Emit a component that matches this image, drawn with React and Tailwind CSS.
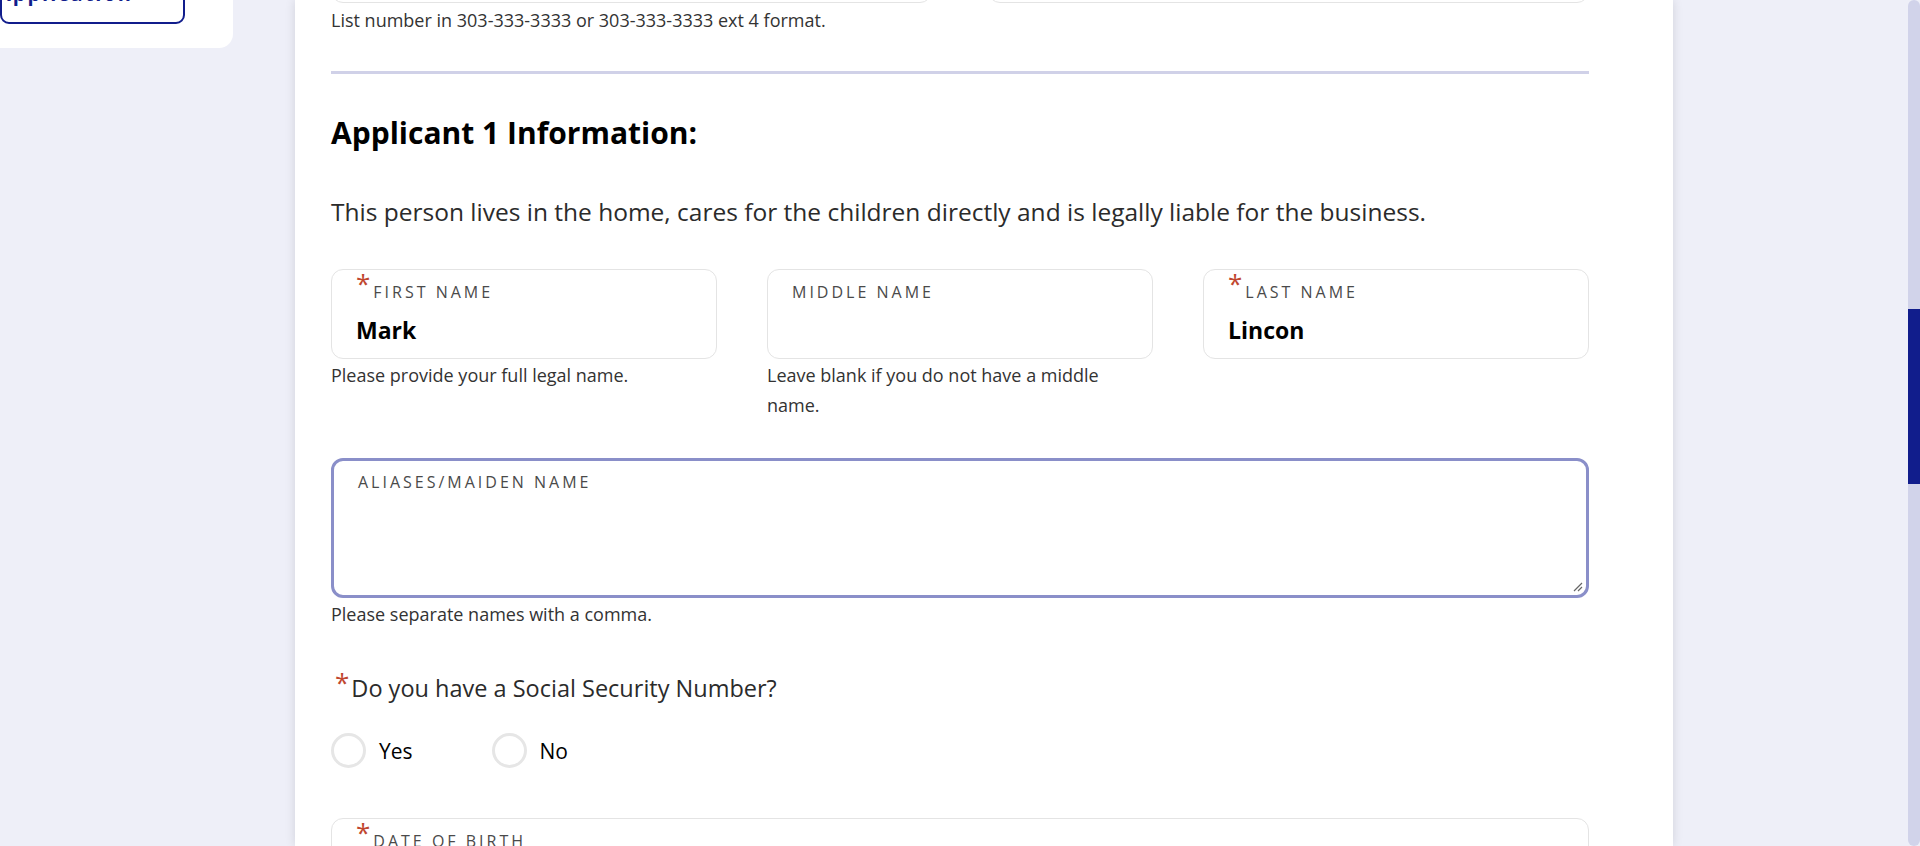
import React from "react";

function FieldBox({ label, value, required }) {
  return (
    <div className="h-[90px] rounded-[12px] border border-[#e4e4e4] bg-white pl-[24px] pr-4 pt-[12px]">
      <div className="flex items-start h-[20px]">
        {required && (
          <span className="relative -top-[9px] mr-[3px] text-[26px] leading-[20px] text-[#c0462f]">*</span>
        )}
        <span className="text-[16px] leading-[20px] tracking-[3px] text-[#4a4a4a] uppercase">{label}</span>
      </div>
      {value && <div className="mt-[14px] text-[23px] font-bold text-black leading-[28px]">{value}</div>}
    </div>
  );
}

function Help({ children, className = "" }) {
  return <p className={"text-[18px] leading-[30px] text-[#333] " + className}>{children}</p>;
}

function Radio({ label }) {
  return (
    <label className="flex items-center mr-[79px]">
      <span className="w-[35px] h-[35px] rounded-full border-[3px] border-[#e6e6e6] bg-white"></span>
      <span className="ml-[13px] text-[21px] leading-[28px] text-black">{label}</span>
    </label>
  );
}

export default function App() {
  return (
    <div className="flex h-[846px] overflow-hidden bg-[#eeeff8] font-['Open_Sans',sans-serif]">
      <aside className="w-[233px] shrink-0">
        <div className="h-[48px] bg-white rounded-br-[14px] flex items-end pb-[24px]">
          <div className="w-[185px] h-[50px] border-2 border-[#111d8c] rounded-[9px] flex items-end justify-end pr-[50px] pb-[18px]">
            <span className="text-[#111d8c] font-bold text-[20px] tracking-[2px] leading-none">Application</span>
          </div>
        </div>
      </aside>
      <div className="w-[62px] shrink-0"></div>
      <main className="w-[1378px] shrink-0 bg-white shadow-[0_0_10px_rgba(0,0,0,0.12)] pl-[36px]">
        <div className="w-[1258px] -mt-[87px]">
          <div className="grid grid-cols-2 gap-[56px]">
            <div className="h-[90px] rounded-[12px] border border-[#e4e4e4]"></div>
            <div className="h-[90px] rounded-[12px] border border-[#e4e4e4]"></div>
          </div>
          <Help className="mt-[2px]">List number in 303-333-3333 or 303-333-3333 ext 4 format.</Help>
          <div className="mt-[36px] h-[3px] bg-[#d0d1e8]"></div>
          <h2 className="mt-[41px] text-[30px] font-bold leading-[36px] text-black">Applicant 1 Information:</h2>
          <p className="mt-[46px] text-[24.5px] leading-[30px] text-[#2b2b2b]">
            This person lives in the home, cares for the children directly and is legally liable for the business.
          </p>
          <div className="mt-[42px] grid grid-cols-3 gap-x-[50px]">
            <div>
              <FieldBox label="First Name" value="Mark" required />
              <Help className="mt-[1px]">Please provide your full legal name.</Help>
            </div>
            <div>
              <FieldBox label="Middle Name" />
              <Help className="mt-[1px]">Leave blank if you do not have a middle name.</Help>
            </div>
            <div>
              <FieldBox label="Last Name" value="Lincon" required />
            </div>
          </div>
          <div className="mt-[38px] relative h-[140px] rounded-[12px] border-[3px] border-[#8a8fc9] pl-[24px] pt-[9px]">
            <span className="text-[16px] leading-[20px] tracking-[3px] text-[#4a4a4a] uppercase">Aliases/Maiden Name</span>
            <svg className="absolute right-[3px] bottom-[3px]" width="12" height="12" viewBox="0 0 12 12">
              <path d="M11 3 L3 11 M11 7 L7 11" stroke="#666" strokeWidth="1.2" />
            </svg>
          </div>
          <Help className="mt-[1px]">Please separate names with a comma.</Help>
          <div className="mt-[44px] flex items-start text-[23.5px] text-[#2b2b2b] leading-[30px]">
            <span className="relative -top-[6px] ml-[4px] mr-[2px] text-[26px] leading-[30px] text-[#c0462f]">*</span>
            <span>Do you have a Social Security Number?</span>
          </div>
          <div className="mt-[30px] flex items-center">
            <Radio label="Yes" />
            <Radio label="No" />
          </div>
          <div className="mt-[50px]">
            <FieldBox label="Date of Birth" required />
          </div>
        </div>
      </main>
      <div className="flex-1"></div>
      <div className="w-[12px] shrink-0 bg-[#d1d3ea] rounded-full flex flex-col">
        <div className="h-[309px]"></div>
        <div className="h-[175px] bg-[#111d8c]"></div>
      </div>
    </div>
  );
}
